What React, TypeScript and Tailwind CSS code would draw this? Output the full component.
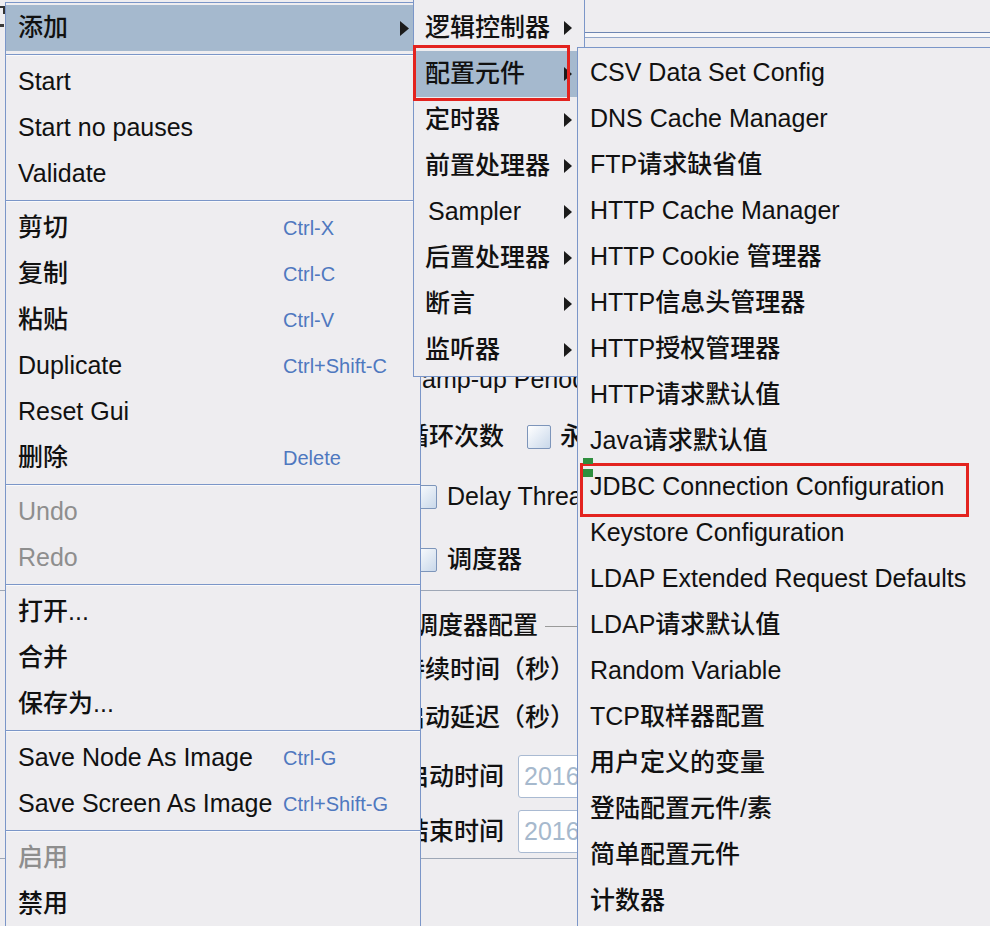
import React from 'react';

type Entry =
  | { label: string; shortcut?: string; disabled?: boolean; active?: boolean; arrow?: boolean }
  | 'sep';

const mainItems: Entry[] = [
  { label: '添加', arrow: true, active: true },
  'sep',
  { label: 'Start' },
  { label: 'Start no pauses' },
  { label: 'Validate' },
  'sep',
  { label: '剪切', shortcut: 'Ctrl-X' },
  { label: '复制', shortcut: 'Ctrl-C' },
  { label: '粘贴', shortcut: 'Ctrl-V' },
  { label: 'Duplicate', shortcut: 'Ctrl+Shift-C' },
  { label: 'Reset Gui' },
  { label: '删除', shortcut: 'Delete' },
  'sep',
  { label: 'Undo', disabled: true },
  { label: 'Redo', disabled: true },
  'sep',
  { label: '打开...' },
  { label: '合并' },
  { label: '保存为...' },
  'sep',
  { label: 'Save Node As Image', shortcut: 'Ctrl-G' },
  { label: 'Save Screen As Image', shortcut: 'Ctrl+Shift-G' },
  'sep',
  { label: '启用', disabled: true },
  { label: '禁用' },
];

const addItems = [
  { label: '逻辑控制器' },
  { label: '配置元件', active: true },
  { label: '定时器' },
  { label: '前置处理器' },
  { label: 'Sampler', pad: true },
  { label: '后置处理器' },
  { label: '断言' },
  { label: '监听器' },
];

const configItems = [
  'CSV Data Set Config',
  'DNS Cache Manager',
  'FTP请求缺省值',
  'HTTP Cache Manager',
  'HTTP Cookie 管理器',
  'HTTP信息头管理器',
  'HTTP授权管理器',
  'HTTP请求默认值',
  'Java请求默认值',
  'JDBC Connection Configuration',
  'Keystore Configuration',
  'LDAP Extended Request Defaults',
  'LDAP请求默认值',
  'Random Variable',
  'TCP取样器配置',
  '用户定义的变量',
  '登陆配置元件/素',
  '简单配置元件',
  '计数器',
];

function Arrow({ w = 9, h = 15 }: { w?: number; h?: number }) {
  return (
    <svg width={w} height={h} viewBox={`0 0 ${w} ${h}`} className="shrink-0">
      <path d={`M0 0 L${w} ${h / 2} L0 ${h} Z`} fill="#1b1b1b" />
    </svg>
  );
}

function Checkbox() {
  return (
    <div className="w-[24px] h-[24px] shrink-0 rounded-[2px] border border-[#7d95ba] bg-gradient-to-br from-white to-[#c9d8ea]" />
  );
}

function Separator() {
  return (
    <div className="h-[8px] pt-[3px]">
      <div className="h-px bg-[#7b96c8]" />
      <div className="h-px bg-white/70" />
    </div>
  );
}

function MainMenu() {
  return (
    <div className="absolute left-[5px] top-[2px] w-[416px] h-[960px] border border-[#7b96c8] bg-[#eeedf0] pt-[2px]">
      {mainItems.map((it, i) =>
        it === 'sep' ? (
          <Separator key={i} />
        ) : (
          <div
            key={i}
            className={`flex items-center h-[46px] pl-[12px] pr-[11px] ${it.active ? 'bg-[#a5b9ce]' : ''}`}
          >
            <span
              className={`w-[265px] shrink-0 whitespace-nowrap text-[25px] ${it.disabled ? 'text-[#8e8e8e]' : 'text-[#111111]'}`}
            >
              {it.label}
            </span>
            {it.shortcut && (
              <span className="text-[20px] font-normal text-[#4f78bf] whitespace-nowrap">{it.shortcut}</span>
            )}
            {it.arrow && (
              <span className="ml-auto flex">
                <Arrow />
              </span>
            )}
          </div>
        ),
      )}
    </div>
  );
}

function AddMenu() {
  return (
    <div className="absolute left-[413px] top-[-1px] w-[172px] border border-[#7b96c8] bg-[#eeedf0] pt-[5px] pb-[3px]">
      {addItems.map((it) => (
        <div
          key={it.label}
          className={`flex items-center h-[46px] pl-[11px] pr-[12px] ${it.active ? 'bg-[#a5b9ce]' : ''}`}
        >
          <span className={`text-[25px] text-[#111111] whitespace-nowrap ${it.pad ? 'pl-[3px]' : ''}`}>
            {it.label}
          </span>
          <span className="ml-auto flex">
            <Arrow w={8} h={14} />
          </span>
        </div>
      ))}
    </div>
  );
}

function ConfigMenu() {
  return (
    <div className="absolute left-[577px] top-[47px] w-[440px] h-[920px] border border-[#7b96c8] bg-[#eeedf0] pt-[2px]">
      {configItems.map((label) => (
        <div key={label} className="flex items-center h-[46px] pl-[12px]">
          <span className="text-[25px] text-[#111111] whitespace-nowrap">{label}</span>
        </div>
      ))}
    </div>
  );
}

function BackgroundPanel() {
  return (
    <div className="flex flex-col w-[990px] h-[926px] text-[25px] text-[#111111]">
      {/* top border of the underlying window + tree strip on the far left */}
      <div className="flex h-[39px]">
        <div className="w-[5px] shrink-0 flex flex-col pt-[6px] gap-[10px]">
          <div className="w-[5px] h-[8px] border-t-2 border-r-2 border-[#333]" />
          <div className="w-[4px] h-[3px] bg-[#3a3a3a]" />
        </div>
        <div className="flex-1 flex flex-col pt-[32px]">
          <div className="h-px bg-[#6e86b2]" />
          <div className="h-[4px] bg-[#f7f7f9]" />
          <div className="h-px bg-[#92a6c8]" />
        </div>
      </div>

      <div className="w-[578px] flex flex-col overflow-hidden">
        <div className="mt-[321px] h-[40px] flex items-center pl-[404px] whitespace-nowrap">
          Ramp-up Period (in seconds):
        </div>
        <div className="mt-[17px] h-[40px] flex items-center pl-[404px] whitespace-nowrap">
          <span>循环次数</span>
          <span className="ml-[23px]">
            <Checkbox />
          </span>
          <span className="ml-[9px]">永远</span>
        </div>
        <div className="mt-[20px] h-[40px] flex items-center pl-[413px] whitespace-nowrap">
          <Checkbox />
          <span className="ml-[10px]">Delay Thread creation until needed</span>
        </div>
        <div className="mt-[23px] h-[40px] flex items-center pl-[413px] whitespace-nowrap">
          <Checkbox />
          <span className="ml-[10px]">调度器</span>
        </div>
        <div className="mt-[10px] h-px bg-[#9ea7b6]" />
        <div className="mt-[15px] h-[40px] flex items-center pl-[413px] whitespace-nowrap">
          <span>调度器配置</span>
          <div className="ml-[7px] flex-1 h-px bg-[#9a9a9a]" />
        </div>
        <div className="mt-[4px] h-[40px] flex items-center pl-[400px] whitespace-nowrap">
          持续时间（秒）
        </div>
        <div className="mt-[8px] h-[40px] flex items-center pl-[400px] whitespace-nowrap">
          启动延迟（秒）
        </div>
        <div className="mt-[17px] h-[43px] flex items-center pl-[404px] whitespace-nowrap">
          <span>启动时间</span>
          <div className="ml-[14px] w-[240px] h-[43px] shrink-0 rounded-[3px] border border-[#a9bad2] bg-white flex items-center pl-[5px] font-normal text-[#a6b9cd]">
            2016/11/18 17:21:30
          </div>
        </div>
        <div className="mt-[12px] h-[43px] flex items-center pl-[404px] whitespace-nowrap">
          <span>结束时间</span>
          <div className="ml-[14px] w-[240px] h-[43px] shrink-0 rounded-[3px] border border-[#a9bad2] bg-white flex items-center pl-[5px] font-normal text-[#a6b9cd]">
            2016/11/18 17:21:30
          </div>
        </div>
        <div className="mt-[5px] h-px bg-[#9ea7b6]" />
      </div>
    </div>
  );
}

export default function App() {
  return (
    <div className="relative w-[990px] h-[926px] overflow-hidden bg-[#eeedf0] font-medium font-['Liberation_Sans','Noto_Sans_CJK_SC',sans-serif]">
      <BackgroundPanel />
      <MainMenu />
      <AddMenu />
      <ConfigMenu />
      {/* highlight boxes drawn over the menus */}
      <div className="absolute left-[413px] top-[45px] w-[157px] h-[56px] border-[3px] border-[#e3231f]" />
      <div className="absolute left-[580px] top-[463px] w-[389px] h-[54px] border-[3px] border-[#e3231f]" />
      <div className="absolute left-[583px] top-[458px] w-[10px] h-[6px] bg-[#2f8f3f]" />
      <div className="absolute left-[583px] top-[469px] w-[10px] h-[8px] bg-[#2f8f3f]" />
    </div>
  );
}
